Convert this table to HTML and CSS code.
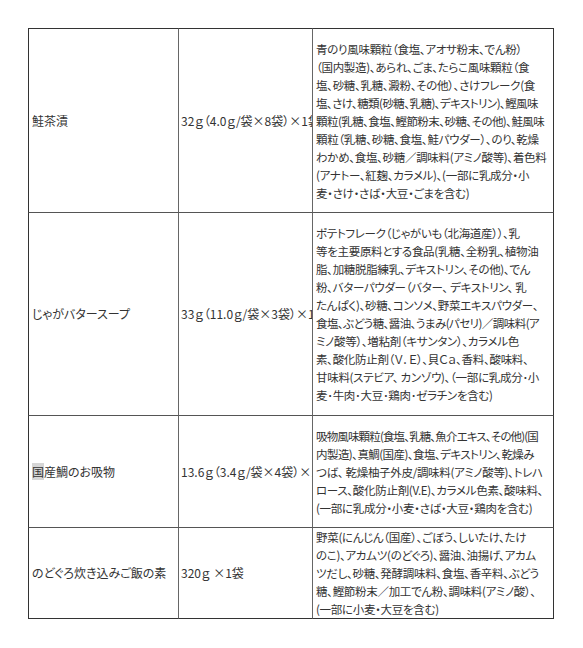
FILE: index.html
```html
<!DOCTYPE html>
<html lang="ja">
<head>
<meta charset="utf-8">
<link rel="stylesheet" href="styles.css">
</head>
<body>
<table class="spec">
  <tr class="r1">
    <td class="name">鮭茶漬</td>
    <td class="amount"><span class="amt">32ｇ（4.0ｇ/袋×8袋）×1袋</span></td>
    <td class="ingr"><span class="ln">青のり風味顆粒（食塩、アオサ粉末、でん粉）</span><span class="ln">（国内製造)、あられ、ごま、たらこ風味顆粒（食</span><span class="ln">塩、砂糖、乳糖、澱粉、その他）、さけフレーク(食</span><span class="ln tight">塩、さけ、糖類(砂糖、乳糖)、デキストリン)、鰹風味</span><span class="ln tight">顆粒(乳糖、食塩、鰹節粉末、砂糖、その他)、鮭風味</span><span class="ln">顆粒（乳糖、砂糖、食塩、鮭パウダー）、のり、乾燥</span><span class="ln">わかめ、食塩、砂糖／調味料(アミノ酸等)、着色料</span><span class="ln">(アナトー、紅麹、カラメル)、(一部に乳成分・小</span><span class="ln">麦・さけ・さば・大豆・ごまを含む)</span></td>
  </tr>
  <tr class="r2">
    <td class="name">じゃがバタースープ</td>
    <td class="amount"><span class="amt">33ｇ（11.0ｇ/袋×3袋）×1袋</span></td>
    <td class="ingr"><span class="ln">ポテトフレーク（じゃがいも（北海道産））、乳</span><span class="ln">等を主要原料とする食品(乳糖、全粉乳、植物油</span><span class="ln">脂、加糖脱脂練乳、デキストリン、その他)、でん</span><span class="ln">粉、バターパウダー（バター、 デキストリン、 乳</span><span class="ln">たんぱく)、砂糖、コンソメ、野菜エキスパウダー、</span><span class="ln tight">食塩、ぶどう糖、醤油、うまみ(パセリ)／調味料(ア</span><span class="ln">ミノ酸等）、増粘剤（キサンタン）、カラメル色</span><span class="ln">素、酸化防止剤（Ｖ．Ｅ）、貝Ｃａ、香料、酸味料、</span><span class="ln">甘味料(ステビア、 カンゾウ)、（一部に乳成分･小</span><span class="ln">麦･牛肉･大豆･鶏肉･ゼラチンを含む)</span></td>
  </tr>
  <tr class="r3">
    <td class="name"><span class="hl">国</span>産鯛のお吸物</td>
    <td class="amount"><span class="amt">13.6ｇ（3.4ｇ/袋×4袋）×1袋</span></td>
    <td class="ingr"><span class="ln tighter">吸物風味顆粒(食塩、乳糖、魚介エキス、その他)(国</span><span class="ln tight">内製造)、真鯛(国産)、食塩、デキストリン、乾燥み</span><span class="ln">つば、 乾燥柚子外皮/調味料(アミノ酸等)、トレハ</span><span class="ln">ロース、酸化防止剤(V.E)、カラメル色素、酸味料、</span><span class="ln">(一部に乳成分・小麦・さば・大豆・鶏肉を含む)</span></td>
  </tr>
  <tr class="r4">
    <td class="name">のどぐろ炊き込みご飯の素</td>
    <td class="amount"><span class="amt">320ｇ ×1袋</span></td>
    <td class="ingr"><span class="ln">野菜(にんじん（国産）、ごぼう、しいたけ、たけ</span><span class="ln">のこ)、アカムツ(のどぐろ)、醤油、油揚げ、アカム</span><span class="ln">ツだし、砂糖、発酵調味料、食塩、香辛料、ぶどう</span><span class="ln">糖、鰹節粉末／加工でん粉、調味料(アミノ酸）、</span><span class="ln">(一部に小麦・大豆を含む)</span></td>
  </tr>
</table>
</body>
</html>
```
FILE: styles.css
```css
html, body {
  margin: 0;
  padding: 0;
  background: #fff;
}
body {
  padding: 28px 0 0 28px;
  font-family: "Noto Sans CJK JP", "Noto Sans", sans-serif;
  font-size: 12px;
  color: #333;
}
.spec {
  border-collapse: separate;
  border-spacing: 0;
  table-layout: fixed;
  width: 526px;
}
.spec td {
  box-sizing: border-box;
  border-left: 1px solid #666;
  border-top: 1px solid #555;
  vertical-align: middle;
  padding: 0;
  line-height: 18px;
  font-feature-settings: "palt";
}
.spec tr:last-child td {
  border-bottom: 1px solid #333;
}
.spec td.ingr {
  border-right: 1px solid #333;
  width: 242px;
  padding: 0 0 0 3px;
  font-size: 11.5px;
  letter-spacing: -0.3px;
}
.spec td.name {
  width: 150px;
  padding-left: 3px;
  border-left-color: #333;
}
.spec td.amount {
  width: 134px;
  padding-left: 2px;
  overflow: hidden;
  white-space: nowrap;
}
.amt {
  display: block;
  overflow: hidden;
}
.ln {
  display: block;
  white-space: nowrap;
}
.ln.tight {
  letter-spacing: -0.55px;
}
.ln.tighter {
  letter-spacing: -0.85px;
}
.hl {
  background: #d6d6d6;
}
.r1 td { height: 184px; border-top-color: #333; }
.r2 td { height: 203px; }
.r3 td { height: 112px; }
.r4 td { height: 92px; }
```
